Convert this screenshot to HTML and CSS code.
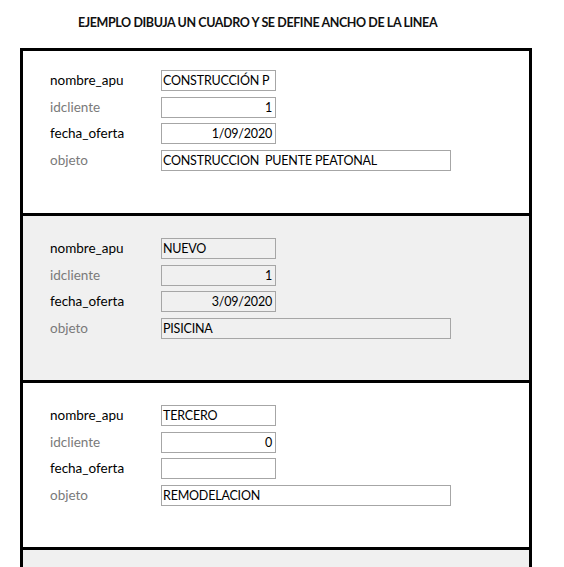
FILE: index.html
```html
<!DOCTYPE html>
<html lang="es">
<head>
<meta charset="utf-8">
<title>Ejemplo</title>
<link rel="stylesheet" href="styles.css">
</head>
<body>
<h1 class="title">EJEMPLO DIBUJA UN CUADRO Y SE DEFINE ANCHO DE LA LINEA</h1>
<div class="frame">
  <section class="record record-first">
    <div class="label">nombre_apu</div><div class="field short">CONSTRUCCIÓN P</div>
    <div class="label muted">idcliente</div><div class="field short num">1</div>
    <div class="label">fecha_oferta</div><div class="field short num">1/09/2020</div>
    <div class="label muted">objeto</div><div class="field long">CONSTRUCCION&nbsp; PUENTE PEATONAL</div>
  </section>
  <section class="record record-alt">
    <div class="label">nombre_apu</div><div class="field short">NUEVO</div>
    <div class="label muted">idcliente</div><div class="field short num">1</div>
    <div class="label">fecha_oferta</div><div class="field short num">3/09/2020</div>
    <div class="label muted">objeto</div><div class="field long">PISICINA</div>
  </section>
  <section class="record">
    <div class="label">nombre_apu</div><div class="field short">TERCERO</div>
    <div class="label muted">idcliente</div><div class="field short num">0</div>
    <div class="label">fecha_oferta</div><div class="field short num"></div>
    <div class="label muted">objeto</div><div class="field long">REMODELACION</div>
  </section>
  <section class="record record-alt record-last"></section>
</div>
</body>
</html>
```
FILE: styles.css
```css
html, body {
  margin: 0;
  padding: 0;
  background: #ffffff;
  overflow: hidden;
}
body {
  font-family: Lato, "Liberation Sans", sans-serif;
  color: #000;
}
.title {
  margin: 0;
  padding: 15px 0 0 78px;
  height: 33px;
  font-size: 12.5px;
  font-weight: 700;
  letter-spacing: -0.4px;
  line-height: 16px;
  color: #111;
}
.frame {
  margin-left: 20px;
  width: 506px;
  border: 3px solid #000;
  border-bottom: none;
}
.record {
  box-sizing: border-box;
  height: 167px;
  border-bottom: 3px solid #000;
  padding: 22px 0 0 27px;
  display: grid;
  grid-template-columns: 111px auto;
  grid-auto-rows: 21px;
  row-gap: 5.7px;
  justify-content: start;
  align-content: start;
}
.record-first {
  height: 165px;
  padding-top: 19px;
}
.record-alt {
  background: #f0f0f0;
}
.record-last {
  height: 17px;
  border-bottom: none;
  padding: 0;
}
.label {
  font-size: 13.5px;
  line-height: 21px;
  color: #000;
}
.label.muted {
  color: #7a7a7a;
}
.field {
  box-sizing: border-box;
  height: 21px;
  border: 1px solid #a6a6a6;
  font-size: 12.5px;
  line-height: 19px;
  padding: 0 3px 0 1px;
  letter-spacing: -0.2px;
  white-space: nowrap;
  overflow: hidden;
}
.field.short { width: 115px; }
.field.long { width: 290px; }
.field.num { text-align: right; }
```
